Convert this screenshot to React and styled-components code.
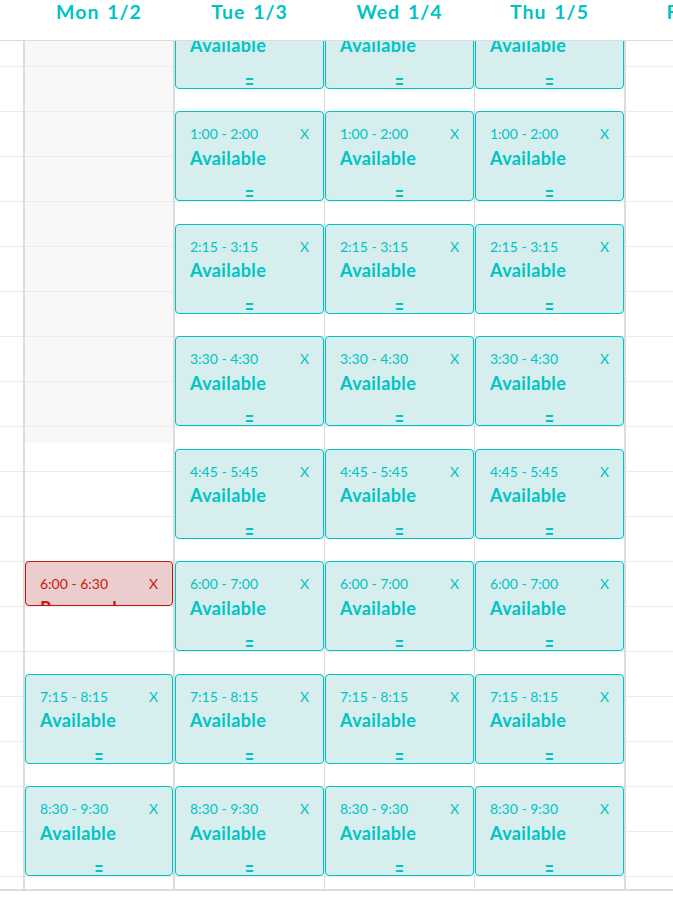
import React, { useLayoutEffect, useRef } from "react";
import styled, { createGlobalStyle } from "styled-components";

const HOUR_H = 90;
const ROW_MIN = 30;
const GRID_START = 11 * 60;
const GRID_END = 23 * 60;
const SCROLL_TOP = ((13 * 60 - GRID_START) / 60) * HOUR_H - 70;

const TEAL = "#00c3c4";

const GlobalStyle = createGlobalStyle`
  html, body { margin: 0; padding: 0; background: #ffffff; }
  body { font-family: Lato, "Noto Sans", sans-serif; overflow: hidden; }
  * { box-sizing: border-box; }
`;

const COLS = "23px 150px 151px 150px 150px 151px";

const Calendar = styled.div`
  width: 673px;
  height: 912px;
  overflow: hidden;
  background: #fff;
`;

const HeaderRow = styled.div`
  display: grid;
  grid-template-columns: ${COLS};
  width: max-content;
  min-width: 100%;
  height: 41px;
  border-bottom: 1px solid #dcdcdc;
`;

const DayHead = styled.div`
  border-left: ${(p) => p.$border}px solid transparent;
  text-align: center;
  color: ${TEAL};
  font-weight: 700;
  font-size: 19.5px;
  line-height: 24px;
  letter-spacing: 1px;
  word-spacing: 2px;
  white-space: nowrap;
`;

const Body = styled.div`
  height: 850px;
  overflow: hidden;
  border-bottom: 2px solid #dcdcdc;
`;

const Grid = styled.div`
  display: grid;
  grid-template-columns: ${COLS};
  width: max-content;
`;

const Column = styled.div`
  position: relative;
  border-left: ${(p) => p.$border || 0}px solid #dcdcdc;
`;

const Slot = styled.div`
  position: relative;
  height: ${HOUR_H / 2}px;
  border-top: 1px solid #ececec;
`;

const PastShade = styled.div`
  position: absolute;
  top: 0;
  left: 0;
  right: 0;
  background: #f8f8f8;
`;

const Card = styled.div`
  position: absolute;
  left: 0;
  right: 0;
  z-index: 2;
  overflow: hidden;
  border: 1px solid ${(p) => (p.$reserved ? "#c1190c" : TEAL)};
  border-radius: 4px;
  background: ${(p) => (p.$reserved ? "#ebcdcd" : "#d6eeee")};
  color: ${(p) => (p.$reserved ? "#c8190c" : TEAL)};
  padding: 13px 14px 0 14px;
`;

const TimeRow = styled.div`
  display: flex;
  justify-content: space-between;
  font-size: 14px;
  line-height: 17px;
  font-weight: 400;
  white-space: nowrap;
`;

const CloseMark = styled.span`
  font-size: 14px;
`;

const Title = styled.div`
  margin-top: 4.5px;
  font-size: 18px;
  line-height: 22px;
  font-weight: 700;
  letter-spacing: 0.4px;
  white-space: nowrap;
`;

const Handle = styled.div`
  position: absolute;
  left: 0;
  right: 0;
  bottom: 0;
  height: 16px;
  text-align: center;
  font-size: 16px;
  line-height: 16px;
  font-weight: 400;
`;

const HandleGlyph = styled.span`
  display: inline-block;
  transform: translateY(1.5px) scaleY(1.8);
  transform-origin: 50% 60%;
`;

const toMin = (t) => {
  const [h, m] = t.split(":").map(Number);
  return h * 60 + m;
};

const fmt = (min) => {
  let h = Math.floor(min / 60) % 12;
  if (h === 0) h = 12;
  const m = String(min % 60).padStart(2, "0");
  return `${h}:${m}`;
};

const standard = [
  ["11:45", "12:45"],
  ["13:00", "14:00"],
  ["14:15", "15:15"],
  ["15:30", "16:30"],
  ["16:45", "17:45"],
  ["18:00", "19:00"],
  ["19:15", "20:15"],
  ["20:30", "21:30"],
].map(([s, e]) => ({ s, e }));

const days = [
  {
    label: "Mon 1/2",
    border: 2,
    past: "16:41",
    slots: [
      { s: "18:00", e: "18:30", reserved: true },
      { s: "19:15", e: "20:15" },
      { s: "20:30", e: "21:30" },
    ],
  },
  { label: "Tue 1/3", border: 2, slots: standard },
  { label: "Wed 1/4", border: 1, slots: standard },
  { label: "Thu 1/5", border: 1, slots: standard },
  { label: "Fri 1/6", border: 2, slots: [] },
];

const rowCount = (GRID_END - GRID_START) / ROW_MIN;
const rows = Array.from({ length: rowCount }, (_, i) => i);
const yOf = (min) => ((min - GRID_START) / 60) * HOUR_H;

function Appointment({ slot }) {
  const s = toMin(slot.s);
  const e = toMin(slot.e);
  return (
    <Card
      $reserved={slot.reserved}
      style={{ top: yOf(s), height: yOf(e) - yOf(s) }}
    >
      <TimeRow>
        <span>
          {fmt(s)} - {fmt(e)}
        </span>
        <CloseMark>X</CloseMark>
      </TimeRow>
      <Title>{slot.reserved ? "Reserved" : "Available"}</Title>
      {!slot.reserved && (
        <Handle>
          <HandleGlyph>=</HandleGlyph>
        </Handle>
      )}
    </Card>
  );
}

export default function App() {
  const bodyRef = useRef(null);
  useLayoutEffect(() => {
    if (bodyRef.current) bodyRef.current.scrollTop = SCROLL_TOP;
  }, []);

  return (
    <>
      <GlobalStyle />
      <Calendar>
        <HeaderRow>
          <div />
          {days.map((d) => (
            <DayHead key={d.label} $border={d.border}>
              {d.label}
            </DayHead>
          ))}
        </HeaderRow>
        <Body ref={bodyRef}>
          <Grid>
            <Column>
              {rows.map((r) => (
                <Slot key={r} />
              ))}
            </Column>
            {days.map((d) => (
              <Column key={d.label} $border={d.border}>
                {d.past && (
                  <PastShade style={{ height: yOf(toMin(d.past)) }} />
                )}
                {rows.map((r) => (
                  <Slot key={r} />
                ))}
                {d.slots.map((sl) => (
                  <Appointment key={sl.s} slot={sl} />
                ))}
              </Column>
            ))}
          </Grid>
        </Body>
      </Calendar>
    </>
  );
}
